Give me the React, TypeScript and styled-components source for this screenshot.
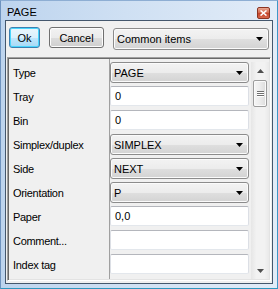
import styled, { createGlobalStyle } from "styled-components";

type Field = {
  label: string;
  kind: "select" | "text";
  value: string;
};

const fields: Field[] = [
  { label: "Type", kind: "select", value: "PAGE" },
  { label: "Tray", kind: "text", value: "0" },
  { label: "Bin", kind: "text", value: "0" },
  { label: "Simplex/duplex", kind: "select", value: "SIMPLEX" },
  { label: "Side", kind: "select", value: "NEXT" },
  { label: "Orientation", kind: "select", value: "P" },
  { label: "Paper", kind: "text", value: "0,0" },
  { label: "Comment...", kind: "text", value: "" },
  { label: "Index tag", kind: "text", value: "" },
];

function DownArrow({ color = "#000" }: { color?: string }) {
  return (
    <svg width="7" height="4" viewBox="0 0 7 4">
      <path d="M0 0h7L3.5 4z" fill={color} />
    </svg>
  );
}

export default function App() {
  return (
    <>
      <GlobalStyle />
      <Window>
        <TitleBar>
          <Title>PAGE</Title>
          <CloseButton aria-label="Close">
            <svg width="7" height="6" viewBox="0 0 7 6">
              <path d="M0.5 0.5l6 5M6.5 0.5l-6 5" stroke="#fff" strokeWidth="1.6" />
            </svg>
          </CloseButton>
        </TitleBar>

        <Client>
          <Toolbar>
            <PushButton $focused $width={31}>
              Ok
            </PushButton>
            <PushButton $width={55}>Cancel</PushButton>
            <Combo $width={156} $height={22}>
              <span>Common items</span>
              <DownArrow />
            </Combo>
          </Toolbar>

          <Grid>
            <Rows>
              {fields.map((f) => (
                <Row key={f.label}>
                  <Label>{f.label}</Label>
                  <Value>
                    {f.kind === "select" ? (
                      <Combo $width={139} $height={21}>
                        <span>{f.value}</span>
                        <DownArrow />
                      </Combo>
                    ) : (
                      <TextBox>{f.value}</TextBox>
                    )}
                  </Value>
                </Row>
              ))}
            </Rows>

            <Scrollbar>
              <ScrollArrow>
                <svg width="7" height="4" viewBox="0 0 7 4">
                  <path d="M0 4h7L3.5 0z" fill="#4f4f4f" />
                </svg>
              </ScrollArrow>
              <Thumb>
                <Grip />
                <Grip />
                <Grip />
              </Thumb>
              <ScrollArrow $bottom>
                <DownArrow color="#4f4f4f" />
              </ScrollArrow>
            </Scrollbar>
          </Grid>
        </Client>
      </Window>
    </>
  );
}

/* styles */

const GlobalStyle = createGlobalStyle`
  html, body {
    margin: 0;
    padding: 0;
    background: #ffffff;
  }
  body {
    font-family: "Liberation Sans", Arial, sans-serif;
    font-size: 11px;
    color: #000;
  }
  * {
    box-sizing: border-box;
  }
`;

const Window = styled.div`
  width: 278px;
  height: 289px;
  display: flex;
  flex-direction: column;
  border: 1px solid;
  border-color: #8eaed3 #3e97c8 #2f97bf #6e93bf;
  background: linear-gradient(to right, #bdd4ee 0%, #cfe0f3 45%, #e2ecf8 100%);
`;

const TitleBar = styled.div`
  height: 19px;
  display: flex;
  align-items: flex-start;
  padding-left: 6px;
`;

const Title = styled.div`
  margin-top: 5px;
  line-height: 13px;
  font-size: 11px;
  color: #000;
`;

const CloseButton = styled.div`
  margin-left: auto;
  margin-right: 7px;
  margin-top: 6px;
  width: 13px;
  height: 12px;
  display: flex;
  align-items: center;
  justify-content: center;
  border: 1px solid #8b3422;
  border-radius: 2px;
  background: linear-gradient(to bottom, #e9a792 0%, #d46a4f 45%, #c4452b 55%, #d7674b 100%);
`;

const Client = styled.div`
  flex: 1;
  margin: 0 4px 4px 4px;
  border: 1px solid #44576d;
  background: #f0f0f0;
  display: flex;
  flex-direction: column;
`;

const Toolbar = styled.div`
  display: flex;
  align-items: flex-start;
  gap: 9px;
  padding: 6px 3px 0 3px;
`;

const PushButton = styled.div<{ $focused?: boolean; $width: number }>`
  width: ${({ $width }) => $width}px;
  height: 21px;
  display: flex;
  align-items: center;
  justify-content: center;
  border: 1px solid ${({ $focused }) => ($focused ? "#3c7fb1" : "#707070")};
  border-radius: 3px;
  background: ${({ $focused }) =>
    $focused
      ? "linear-gradient(to bottom, #eaf6fd 0%, #d9f0fc 50%, #bee6fd 51%, #a7d9f5 100%)"
      : "linear-gradient(to bottom, #f2f2f2 0%, #ebebeb 50%, #dddddd 51%, #cfcfcf 100%)"};
  box-shadow: inset 0 0 0 1px
    ${({ $focused }) => ($focused ? "#48d5fc" : "#fcfcfc")};
  font-size: 11px;
`;

const Combo = styled.div<{ $width: number; $height: number }>`
  width: ${({ $width }) => $width}px;
  height: ${({ $height }) => $height}px;
  margin-top: ${({ $height }) => ($height > 21 ? 1 : 0)}px;
  display: flex;
  align-items: center;
  justify-content: space-between;
  padding: 0 5px 0 3px;
  border: 1px solid #8c8c8c;
  border-radius: 3px;
  background: linear-gradient(to bottom, #f3f3f3 0%, #ececec 50%, #dfdfdf 51%, #d3d3d3 100%);
  box-shadow: inset 0 0 0 1px #fbfbfb;
  font-size: 11px;
`;

const Grid = styled.div`
  flex: 1;
  margin: 7px 1px 2px 1px;
  display: flex;
  padding: 1px;
  border: 1px solid;
  border-color: #a0a0a0 #ffffff #ffffff #a0a0a0;
  box-shadow: inset 1px 1px 0 #696969, inset -1px -1px 0 #e3e3e3;
  overflow: hidden;
`;

const Rows = styled.div`
  width: 242px;
  display: flex;
  flex-direction: column;
  background: linear-gradient(
    to right,
    transparent 100px,
    #a0a0a0 100px,
    #a0a0a0 101px,
    transparent 101px
  );
`;

const Row = styled.div`
  height: 24px;
  flex-shrink: 0;
  display: flex;
  align-items: flex-start;
  padding-top: 3px;
`;

const Label = styled.div`
  width: 101px;
  padding-left: 4px;
  line-height: 23px;
  font-size: 11px;
  letter-spacing: -0.3px;
  white-space: nowrap;
`;

const Value = styled.div`
  width: 139px;
`;

const TextBox = styled.div`
  width: 139px;
  height: 20px;
  display: flex;
  align-items: center;
  padding-left: 4px;
  background: #ffffff;
  border: 1px solid;
  border-color: #b4b6bc #dcdfe5 #e3e7ec #dcdfe5;
  border-radius: 2px;
  font-size: 11px;
`;

const Scrollbar = styled.div`
  width: 18px;
  margin-top: 3px;
  display: flex;
  flex-direction: column;
  background: linear-gradient(to right, #e6e6e6 0%, #f2f2f2 30%, #f2f2f2 75%, #e9e9e9 100%);
`;

const ScrollArrow = styled.div<{ $bottom?: boolean }>`
  height: 17px;
  display: flex;
  align-items: center;
  justify-content: center;
  margin-top: ${({ $bottom }) => ($bottom ? "auto" : "0")};
`;

const Thumb = styled.div`
  height: 27px;
  margin: 1px 2px 0 2px;
  display: flex;
  flex-direction: column;
  align-items: center;
  justify-content: center;
  gap: 1px;
  border: 1px solid #9c9c9c;
  border-radius: 2px;
  background: linear-gradient(to right, #f6f6f6 0%, #ececec 50%, #dcdcdc 100%);
  box-shadow: inset 0 0 0 1px #fafafa;
`;

const Grip = styled.div`
  width: 7px;
  height: 1px;
  background: #6f6f6f;
  box-shadow: 0 1px 0 #ffffff;
`;
